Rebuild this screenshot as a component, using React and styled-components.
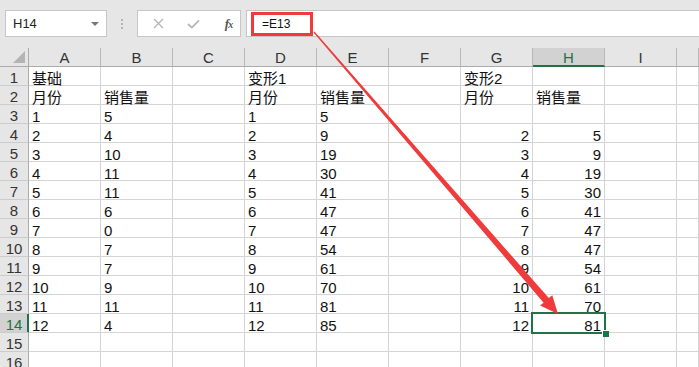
import React from "react";
import styled, { createGlobalStyle } from "styled-components";

const GlobalStyle = createGlobalStyle`
  html, body {
    margin: 0;
    padding: 0;
    background: #fff;
  }
  body {
    font-family: "Liberation Sans", Arial, "Noto Sans CJK SC", sans-serif;
  }
`;

const GREEN = "#217346";
const GRID = "#d4d4d4";
const HEAD_BG = "#e6e6e6";
const RED = "#ef3b3b";

const Page = styled.div`
  position: relative;
  width: 699px;
  height: 367px;
  overflow: hidden;
  background: #fff;
`;

const FormulaBar = styled.div`
  display: flex;
  align-items: stretch;
  height: 48px;
  box-sizing: border-box;
  padding: 10px 0 11px;
  background: ${HEAD_BG};
`;

const NameBox = styled.div`
  display: flex;
  align-items: center;
  justify-content: space-between;
  width: 102px;
  margin-left: 5px;
  box-sizing: border-box;
  padding: 0 7px 0 7px;
  background: #fff;
  border: 1px solid #c6c6c6;
  font-size: 13px;
  color: #222;
`;

const Caret = styled.span`
  width: 0;
  height: 0;
  border-left: 4px solid transparent;
  border-right: 4px solid transparent;
  border-top: 4px solid #777;
`;

const Grip = styled.div`
  width: 30px;
  display: flex;
  flex-direction: column;
  align-items: center;
  justify-content: center;
  gap: 2px;

  & > i {
    width: 2px;
    height: 2px;
    background: #b3b3b3;
  }
`;

const ActionBox = styled.div`
  display: grid;
  grid-template-columns: repeat(3, 35px);
  align-items: center;
  justify-items: center;
  width: 104px;
  box-sizing: border-box;
  padding-left: 3px;
  background: #fff;
  border: 1px solid #c6c6c6;
`;

const Fx = styled.span`
  font-family: "Liberation Serif", "Times New Roman", serif;
  font-style: italic;
  font-weight: bold;
  font-size: 13px;
  color: #555;
  letter-spacing: -1px;

  & > small {
    font-size: 10px;
  }
`;

const FormulaInput = styled.div`
  flex: 1;
  display: flex;
  align-items: center;
  margin-left: 5px;
  background: #fff;
  border-top: 1px solid #c6c6c6;
  border-bottom: 1px solid #c6c6c6;
  border-left: 1px solid #c6c6c6;
`;

const Highlight = styled.div`
  display: flex;
  align-items: center;
  width: 62px;
  height: 24px;
  margin-left: 4px;
  box-sizing: border-box;
  padding-left: 8px;
  border: 3px solid ${RED};
  font-size: 12px;
  color: #111;
`;

const Sheet = styled.div`
  display: grid;
  grid-template-columns: 29px repeat(9, 72px) 1fr;
  grid-auto-rows: 19px;
  font-size: 15px;
  color: #111;
`;

const Corner = styled.div`
  display: flex;
  align-items: flex-end;
  justify-content: flex-end;
  padding: 0 3px 3px 0;
  background: ${HEAD_BG};
  border-right: 1px solid #ababab;
  border-bottom: 1px solid #ababab;

  &::after {
    content: "";
    width: 0;
    height: 0;
    border-left: 12px solid transparent;
    border-bottom: 12px solid #b4b4b4;
  }
`;

const ColHead = styled.div`
  box-sizing: border-box;
  text-align: center;
  line-height: 18px;
  padding-top: 1px;
  background: ${(p) => (p.$active ? "#d2d2d2" : HEAD_BG)};
  color: ${(p) => (p.$active ? GREEN : "#333")};
  border-right: 1px solid #b8b8b8;
  border-bottom: ${(p) => (p.$active ? `2px solid ${GREEN}` : "1px solid #ababab")};
`;

const RowHead = styled.div`
  box-sizing: border-box;
  text-align: center;
  line-height: 16px;
  padding-top: 3px;
  background: ${(p) => (p.$active ? "#d2d2d2" : HEAD_BG)};
  color: ${(p) => (p.$active ? GREEN : "#333")};
  border-right: 1px solid ${(p) => (p.$active ? GREEN : "#ababab")};
  border-bottom: 1px solid #cccccc;
  box-shadow: ${(p) => (p.$active ? `inset -1px 0 0 ${GREEN}` : "none")};
`;

const Cell = styled.div`
  position: relative;
  box-sizing: border-box;
  padding: 4px 3px 0 3px;
  line-height: 16px;
  white-space: nowrap;
  text-align: ${(p) => p.$align};
  border-right: 1px solid ${GRID};
  border-bottom: 1px solid ${GRID};
`;

const Selection = styled.div`
  position: absolute;
  left: -2px;
  top: -2px;
  right: -2px;
  bottom: -2px;
  border: 2px solid ${GREEN};
  pointer-events: none;
  z-index: 1;

  &::after {
    content: "";
    position: absolute;
    right: -5px;
    bottom: -5px;
    width: 6px;
    height: 6px;
    background: ${GREEN};
    border-left: 1px solid #fff;
    border-top: 1px solid #fff;
  }
`;

const ArrowLayer = styled.svg`
  position: absolute;
  left: 0;
  top: 0;
  pointer-events: none;
  z-index: 2;
`;

const COLS = ["A", "B", "C", "D", "E", "F", "G", "H", "I"];

const base = [5, 4, 10, 11, 11, 6, 0, 7, 7, 9, 11, 4];
const v1 = [5, 9, 19, 30, 41, 47, 47, 54, 61, 70, 81, 85];

const buildRows = () => {
  const rows = [
    { A: "基础", D: "变形1", G: "变形2" },
    { A: "月份", B: "销售量", D: "月份", E: "销售量", G: "月份", H: "销售量" },
  ];
  for (let i = 0; i < 12; i++) {
    const r = { A: String(i + 1), B: String(base[i]), D: String(i + 1), E: String(v1[i]) };
    if (i > 0) {
      r.G = { v: String(i + 1), right: true };
      r.H = { v: String(v1[i - 1]), right: true };
    }
    rows.push(r);
  }
  rows.push({}, {});
  return rows;
};

const rows = buildRows();

const XIcon = () => (
  <svg width="11" height="11" viewBox="0 0 11 11">
    <path d="M1 1 L10 10 M10 1 L1 10" stroke="#b5b5b5" strokeWidth="1.3" fill="none" />
  </svg>
);

const CheckIcon = () => (
  <svg width="13" height="10" viewBox="0 0 13 10">
    <path d="M1 5 L4.8 8.6 L12 1.4" stroke="#b5b5b5" strokeWidth="1.8" fill="none" />
  </svg>
);

const Arrow = () => (
  <ArrowLayer width="699" height="367" viewBox="0 0 699 367">
    <polygon
      fill={RED}
      points="313.5,32.4 543.6,302.7 540.1,305.6 558,314 552.3,295.2 548.8,298.1 314.5,31.6"
    />
  </ArrowLayer>
);

const App = () => (
  <Page>
    <GlobalStyle />
    <FormulaBar>
      <NameBox>
        <span>H14</span>
        <Caret />
      </NameBox>
      <Grip>
        <i />
        <i />
        <i />
      </Grip>
      <ActionBox>
        <XIcon />
        <CheckIcon />
        <Fx>
          f<small>x</small>
        </Fx>
      </ActionBox>
      <FormulaInput>
        <Highlight>=E13</Highlight>
      </FormulaInput>
    </FormulaBar>

    <Sheet>
      <Corner />
      {COLS.map((c) => (
        <ColHead key={c} $active={c === "H"}>
          {c}
        </ColHead>
      ))}
      <ColHead />

      {rows.map((row, ri) => (
        <React.Fragment key={ri}>
          <RowHead $active={ri === 13}>{ri + 1}</RowHead>
          {COLS.map((c) => {
            const val = row[c];
            const text = typeof val === "object" ? val.v : val;
            const right = typeof val === "object" && val.right;
            return (
              <Cell key={c} $align={right ? "right" : "left"}>
                {text}
                {ri === 13 && c === "H" && <Selection />}
              </Cell>
            );
          })}
          <Cell $align="left" />
        </React.Fragment>
      ))}
    </Sheet>

    <Arrow />
  </Page>
);

export default App;
